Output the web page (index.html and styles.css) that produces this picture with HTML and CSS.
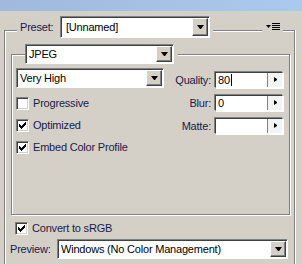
FILE: index.html
```html
<!DOCTYPE html>
<html lang="en">
<head>
    <meta charset="UTF-8">
    <title>Save for Web - Settings</title>
    <link rel="stylesheet" href="styles.css">
</head>
<body>
    <div class="titlebar"></div>

    <div class="panel">
        <div class="panel-head">
            <div class="head-left">
                <span class="head-label">Preset:</span>
                <div class="select preset-select">
                    <span class="select-text">[Unnamed]</span>
                    <span class="drop-btn"><i class="arrow-down"></i></span>
                </div>
            </div>
            <div class="head-menu">
                <svg width="14" height="8" viewBox="0 0 14 8">
                    <path d="M0 2h5l-2.5 3z" fill="#000"/>
                    <rect x="6" y="0" width="8" height="1" fill="#000"/>
                    <rect x="6" y="2" width="8" height="1" fill="#000"/>
                    <rect x="6" y="4" width="8" height="1" fill="#000"/>
                    <rect x="6" y="6" width="8" height="1" fill="#000"/>
                </svg>
            </div>
        </div>

        <div class="group">
            <div class="group-head">
                <div class="select format-select">
                    <span class="select-text">JPEG</span>
                    <span class="drop-btn"><i class="arrow-down"></i></span>
                </div>
            </div>

            <div class="group-body">
                <div class="col-left">
                    <div class="select quality-select">
                        <span class="select-text">Very High</span>
                        <span class="drop-btn"><i class="arrow-down"></i></span>
                    </div>
                    <label class="check-row"><span class="checkbox"></span>Progressive</label>
                    <label class="check-row"><span class="checkbox checked"></span>Optimized</label>
                    <label class="check-row"><span class="checkbox checked"></span>Embed Color Profile</label>
                </div>

                <div class="col-right">
                    <span class="field-label">Quality:</span>
                    <div class="field"><span class="field-text">80<i class="caret"></i></span><span class="step-btn"><i class="arrow-right"></i></span></div>
                    <span class="field-label">Blur:</span>
                    <div class="field"><span class="field-text">0</span><span class="step-btn"><i class="arrow-right"></i></span></div>
                    <span class="field-label">Matte:</span>
                    <div class="field"><span class="field-text"></span><span class="step-btn"><i class="arrow-right"></i></span></div>
                </div>
            </div>
        </div>

        <label class="check-row convert-row"><span class="checkbox checked"></span>Convert to sRGB</label>

        <div class="preview-row">
            <span class="preview-label">Preview:</span>
            <div class="select preview-select">
                <span class="select-text">Windows (No Color Management)</span>
                <span class="drop-btn"><i class="arrow-down"></i></span>
            </div>
        </div>
    </div>
</body>
</html>
```

FILE: styles.css
```css
/* save for web settings panel */
body {
    margin: 0;
    height: 264px;
    overflow: hidden;
    background-color: #d4d0c8;
    font-family: "Liberation Sans", Arial, sans-serif;
    font-size: 11px;
    letter-spacing: -0.2px;
    color: #1a1a48;
}

.titlebar {
    height: 11px;
    background: linear-gradient(to right, #a0b9dc, #abc9ef);
}

/* outer etched frame, open at the bottom */
.panel {
    margin-top: 19px;
    margin-left: 4px;
    width: 291px;
    height: 240px;
    box-sizing: border-box;
    border: 1px solid #808080;
    border-bottom: none;
    box-shadow: inset 1px 1px #fff;
    position: relative;
}

.panel::after {
    content: "";
    position: absolute;
    top: -1px;
    right: -2px;
    width: 1px;
    height: 100%;
    background: #fff;
}

.panel-head {
    display: flex;
    align-items: center;
    height: 22px;
    margin-top: -15px;
}

.head-left {
    display: flex;
    align-items: center;
    margin-left: 12px;
    padding-right: 3px;
    background-color: #d4d0c8;
}

.head-label {
    width: 38px;
    padding-left: 3px;
}

.head-menu {
    margin-left: auto;
    margin-right: 11px;
    padding: 0 3px 0 4px;
    height: 10px;
    display: flex;
    align-items: center;
    background-color: #d4d0c8;
}

/* sunken combo box */
.select {
    display: flex;
    align-items: center;
    box-sizing: border-box;
    background: #fff;
    border: 1px solid;
    border-color: #808080 #fff #fff #808080;
    box-shadow: inset 1px 1px #404040;
    color: #000;
}

.select-text {
    flex: 1;
    padding-left: 3px;
    white-space: nowrap;
    overflow: hidden;
}

.drop-btn {
    display: flex;
    align-items: center;
    justify-content: center;
    box-sizing: border-box;
    width: 16px;
    height: calc(100% - 2px);
    margin-right: 1px;
    background: #d4d0c8;
    border: 1px solid;
    border-color: #fff #404040 #404040 #fff;
    box-shadow: inset -1px -1px #808080;
}

.arrow-down {
    display: block;
    width: 1px;
    height: 0;
    border-left: 3px solid transparent;
    border-right: 3px solid transparent;
    border-top: 4px solid #000;
}

.preset-select {
    width: 150px;
    height: 22px;
    margin-left: 2px;
}

.preset-select .select-text {
    padding-left: 5px;
}

/* inner etched group */
.group {
    margin-top: 16px;
    margin-left: 6px;
    width: 279px;
    height: 161px;
    box-sizing: border-box;
    border: 1px solid #808080;
    box-shadow: inset 1px 1px #fff, 1px 1px #fff;
}

.group-head {
    display: flex;
    margin-top: -11px;
    margin-left: 13px;
}

.format-select {
    width: 149px;
    height: 20px;
    box-shadow: inset 1px 1px #404040, 4px 0 #d4d0c8;
}

.group-body {
    display: flex;
    margin-top: 4px;
}

.col-left {
    width: 148px;
    margin-left: 4px;
}

.quality-select {
    height: 20px;
    margin-bottom: 4px;
}

.check-row {
    display: flex;
    align-items: center;
    height: 22px;
    white-space: nowrap;
}

.checkbox {
    width: 13px;
    height: 13px;
    box-sizing: border-box;
    margin-right: 4px;
    background: #fff;
    border: 1px solid;
    border-color: #808080 #fff #fff #808080;
    box-shadow: inset 1px 1px #404040, inset -1px -1px #d4d0c8;
}

.checkbox.checked {
    background: #fff url("data:image/svg+xml,%3Csvg xmlns='http://www.w3.org/2000/svg' width='7' height='7'%3E%3Cpath d='M0 2h1v1h1v1h1V3h1V2h1V1h1V0h1v3H6v1H5v1H4v1H3v1H2V6H1V5H0z' fill='%23000'/%3E%3C/svg%3E") no-repeat 2px 2px;
}

.col-right {
    display: grid;
    grid-template-columns: auto 68px;
    grid-auto-rows: 23px;
    column-gap: 4px;
    align-items: center;
    margin-left: auto;
    margin-right: 6px;
}

.field-label {
    text-align: right;
}

.field {
    display: flex;
    height: 16px;
    box-sizing: border-box;
    background: #fff;
    border: 1px solid;
    border-color: #404040 #fff #fff #404040;
    box-shadow: 1px 1px #fff, -1px -1px #808080;
    color: #000;
}

.field-text {
    flex: 1;
    display: flex;
    align-items: center;
    padding-left: 2px;
    line-height: 14px;
}

.caret {
    display: inline-block;
    width: 1px;
    height: 12px;
    margin-left: 1px;
    background: #000;
}

.step-btn {
    display: flex;
    align-items: center;
    justify-content: center;
    width: 14px;
    border-left: 1px solid #808080;
    background: #f4f4f4;
}

.arrow-right {
    display: block;
    width: 0;
    height: 1px;
    border-top: 2px solid transparent;
    border-bottom: 2px solid transparent;
    border-left: 3px solid #000;
}

.convert-row {
    margin-top: 2px;
    padding-left: 10px;
}

.preview-row {
    display: flex;
    align-items: center;
    height: 20px;
    padding-left: 5px;
}

.preview-label {
    width: 47px;
}

.preview-select {
    width: 231px;
    height: 20px;
}
```
